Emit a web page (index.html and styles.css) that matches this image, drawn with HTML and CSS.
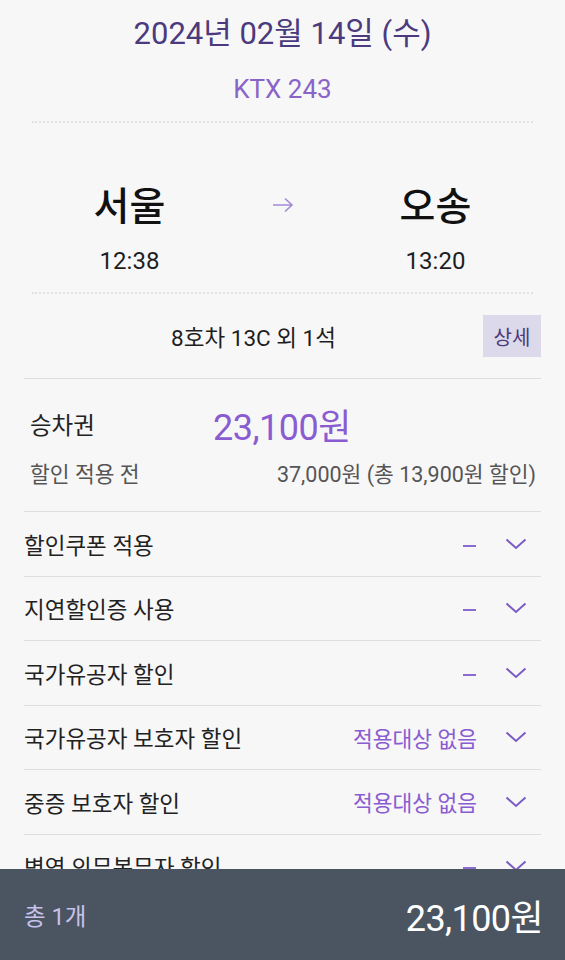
FILE: index.html
```html
<!DOCTYPE html>
<html lang="ko">
<head>
    <meta charset="UTF-8">
    <meta name="viewport" content="width=device-width, initial-scale=1.0">
    <title>승차권 할인 선택</title>
    <link rel="stylesheet" href="styles.css">
</head>
<body>
    <div class="page">
        <div class="trip-head">
            <div class="date">2024년 02월 14일 (수)</div>
            <div class="train">KTX 243</div>
        </div>

        <div class="route">
            <div class="station">
                <div class="name">서울</div>
                <div class="time">12:38</div>
            </div>
            <div class="arrow">
                <svg width="22" height="16" viewBox="0 0 22 16">
                    <path d="M1 8H20M13 1.5L20 8L13 14.5" fill="none" stroke="#a58ad8" stroke-width="1.6"/>
                </svg>
            </div>
            <div class="station">
                <div class="name">오송</div>
                <div class="time">13:20</div>
            </div>
        </div>

        <div class="seat-row">
            <div class="seat">8호차 13C 외 1석</div>
            <button class="detail-btn">상세</button>
        </div>

        <div class="fare">
            <div class="fare-main">
                <span class="fare-label">승차권</span>
                <span class="fare-price">23,100원</span>
            </div>
            <div class="fare-sub">
                <span>할인 적용 전</span>
                <span>37,000원 (총 13,900원 할인)</span>
            </div>
        </div>

        <!-- 할인 항목 목록 -->
        <ul class="discounts">
            <li class="discount">
                <span class="d-name">할인쿠폰 적용</span>
                <span class="d-value"><i class="dash"></i></span>
                <svg class="chev" width="22" height="12" viewBox="0 0 22 12"><path d="M1.5 1.5L11 10L20.5 1.5" fill="none" stroke="#7b5cc4" stroke-width="2"/></svg>
            </li>
            <li class="discount">
                <span class="d-name">지연할인증 사용</span>
                <span class="d-value"><i class="dash"></i></span>
                <svg class="chev" width="22" height="12" viewBox="0 0 22 12"><path d="M1.5 1.5L11 10L20.5 1.5" fill="none" stroke="#7b5cc4" stroke-width="2"/></svg>
            </li>
            <li class="discount">
                <span class="d-name">국가유공자 할인</span>
                <span class="d-value"><i class="dash"></i></span>
                <svg class="chev" width="22" height="12" viewBox="0 0 22 12"><path d="M1.5 1.5L11 10L20.5 1.5" fill="none" stroke="#7b5cc4" stroke-width="2"/></svg>
            </li>
            <li class="discount">
                <span class="d-name">국가유공자 보호자 할인</span>
                <span class="d-value">적용대상 없음</span>
                <svg class="chev" width="22" height="12" viewBox="0 0 22 12"><path d="M1.5 1.5L11 10L20.5 1.5" fill="none" stroke="#7b5cc4" stroke-width="2"/></svg>
            </li>
            <li class="discount">
                <span class="d-name">중증 보호자 할인</span>
                <span class="d-value">적용대상 없음</span>
                <svg class="chev" width="22" height="12" viewBox="0 0 22 12"><path d="M1.5 1.5L11 10L20.5 1.5" fill="none" stroke="#7b5cc4" stroke-width="2"/></svg>
            </li>
            <li class="discount">
                <span class="d-name">병역 의무복무자 할인</span>
                <span class="d-value"><i class="dash"></i></span>
                <svg class="chev" width="22" height="12" viewBox="0 0 22 12"><path d="M1.5 1.5L11 10L20.5 1.5" fill="none" stroke="#7b5cc4" stroke-width="2"/></svg>
            </li>
        </ul>
    </div>

    <div class="total-bar">
        <span class="total-count">총 1개</span>
        <span class="total-price">23,100원</span>
    </div>
</body>
</html>
```

FILE: styles.css
```css
body {
    margin: 0;
    padding: 0;
    background-color: #f7f7f8;
    font-family: Roboto, "Noto Sans CJK KR", sans-serif;
    color: #1e1e1e;
    height: 960px;
    overflow: hidden;
    position: relative;
}
.page {
    padding: 0 24px;
}
.trip-head {
    text-align: center;
    margin: 0 8px;
    padding-top: 13px;
    height: 108px;
    border-bottom: 2px dotted #e2e2e6;
}
.date {
    font-size: 31px;
    line-height: 42px;
    color: #4b3a7d;
}
.train {
    margin-top: 19px;
    font-size: 26px;
    line-height: 30px;
    color: #8a63c9;
}
.route {
    display: grid;
    grid-template-columns: 1fr 1fr 1fr;
    margin: 0 8px;
    padding: 60px 21px 0;
    height: 109px;
    border-bottom: 2px dotted #e2e2e6;
}
.station {
    text-align: center;
}
.station .name {
    font-size: 39px;
    line-height: 48px;
    font-weight: 500;
    color: #111;
}
.station .time {
    margin-top: 15px;
    font-size: 24px;
    line-height: 30px;
    color: #1e1e1e;
}
.arrow {
    text-align: center;
    padding-top: 14px;
}
.seat-row {
    display: flex;
    align-items: center;
    height: 84px;
    border-bottom: 1px solid #dedee2;
}
.seat {
    flex: 1;
    text-align: center;
    font-size: 22.5px;
    color: #1e1e1e;
}
.detail-btn {
    width: 58px;
    height: 42px;
    border: none;
    border-radius: 0;
    background-color: #dcd9ea;
    color: #4b3a7d;
    font-family: inherit;
    font-size: 20px;
    padding: 0;
}
.fare {
    padding: 0 5px 0 6px;
    height: 132px;
    border-bottom: 1px solid #dedee2;
}
.fare-main {
    display: flex;
    align-items: center;
    height: 90px;
}
.fare-label {
    width: 183px;
    font-size: 23.5px;
    color: #222;
}
.fare-price {
    font-size: 36px;
    color: #8a5cd1;
    letter-spacing: -0.5px;
}
.fare-sub {
    display: flex;
    justify-content: space-between;
    margin-top: -6px;
    font-size: 21.5px;
    line-height: 24px;
    color: #555;
}
.discounts {
    list-style: none;
    margin: 0;
    padding: 0;
}
.discount {
    display: flex;
    align-items: center;
    height: 63.5px;
    border-bottom: 1px solid #dedee2;
}
.d-name {
    flex: 1;
    font-size: 22.5px;
    color: #222;
}
.d-value {
    font-size: 21.5px;
    color: #8a5cd1;
}
.dash {
    display: inline-block;
    width: 13px;
    height: 2px;
    margin-right: 1px;
    vertical-align: middle;
    background-color: #8a6bd0;
}
.chev {
    margin: 0 14px 0 28px;
}
.total-bar {
    position: absolute;
    left: 0;
    right: 0;
    bottom: 0;
    height: 91px;
    background-color: #4a5561;
    display: flex;
    align-items: center;
    justify-content: space-between;
    padding: 0 22px 0 24px;
}
.total-count {
    font-size: 23.5px;
    color: #c7c2ec;
}
.total-price {
    font-size: 36px;
    color: #fff;
    letter-spacing: -0.6px;
}
```
